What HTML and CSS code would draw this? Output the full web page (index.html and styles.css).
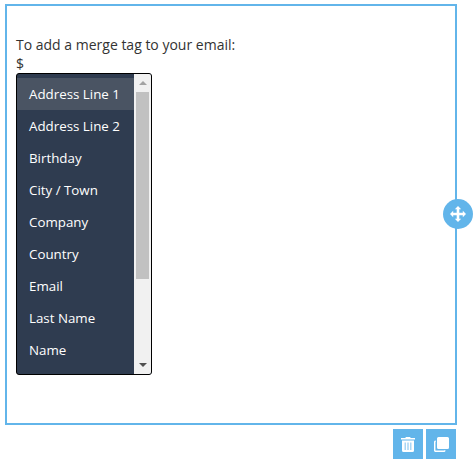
FILE: index.html
```html
<!DOCTYPE html>
<html lang="en">
<head>
<meta charset="utf-8">
<title>Merge tag</title>
<link rel="stylesheet" href="styles.css">
</head>
<body>
<div class="frame">
  <p class="line">To add a merge tag to your email:</p>
  <p class="line">$</p>
  <div class="dropdown">
    <ul class="items">
      <li class="item active">Address Line 1</li>
      <li class="item">Address Line 2</li>
      <li class="item">Birthday</li>
      <li class="item">City / Town</li>
      <li class="item">Company</li>
      <li class="item">Country</li>
      <li class="item">Email</li>
      <li class="item">Last Name</li>
      <li class="item">Name</li>
    </ul>
    <div class="scrollbar">
      <span class="arrow up"></span>
      <span class="thumb"></span>
      <span class="arrow down"></span>
    </div>
  </div>
  <button class="move" aria-label="Move">
    <svg viewBox="0 0 16 16" width="16" height="16"><path fill="#fff" d="M8 0l3.200 3.200H9.300v3.500h3.500V4.800L16 8l-3.200 3.200V9.300H9.300v3.500h1.900L8 16l-3.200-3.200h1.900V9.300H3.200v1.900L0 8l3.200-3.200v1.900h3.500V3.200H4.800z"/></svg>
  </button>
</div>
<div class="actions">
  <button class="action" aria-label="Delete">
    <svg viewBox="0 0 14 15" width="14" height="15"><path fill="#fff" d="M5 0h4l.8 1H14v1.500H0V1h4.200zM1 3.500h12v10A1.500 1.500 0 0 1 11.500 15h-9A1.500 1.500 0 0 1 1 13.500z"/><path fill="#a9d6f5" d="M3.500 5.500h1.500v7.500H3.500zM6.250 5.500h1.500v7.500h-1.500zM9 5.500h1.500v7.500H9z"/></svg>
  </button>
  <button class="action" aria-label="Duplicate">
    <svg viewBox="0 0 15 15" width="15" height="15"><path fill="#fff" d="M4.500 0h9A1.500 1.500 0 0 1 15 1.500v9a1.500 1.500 0 0 1-1.500 1.500h-9A1.500 1.500 0 0 1 3 10.500v-9A1.500 1.500 0 0 1 4.500 0z"/><path fill="none" stroke="#fff" stroke-width="1.500" d="M1.800 4.200h-.1a1 1 0 0 0-1 1v8.100a1 1 0 0 0 1 1h8.100a1 1 0 0 0 1-1v-.1"/></svg>
  </button>
</div>
</body>
</html>
```
FILE: styles.css
```css
* { box-sizing: border-box; }
html, body { margin: 0; padding: 0; background: #fff; }
body {
  padding: 4px 19px 0 5px;
  font-family: "Open Sans", sans-serif;
  font-size: 14px;
  color: #333;
}
.frame {
  position: relative;
  height: 421px;
  border: 2px solid #62b5ea;
  padding: 29px 9px 0;
}
.line { margin: 0; line-height: 19px; height: 19px; }
.dropdown {
  display: flex;
  width: 136px;
  height: 302px;
  border: 1px solid #000;
  border-radius: 3px;
  background: #2f3c50;
  overflow: hidden;
}
.items {
  flex: 1;
  list-style: none;
  margin: 0;
  padding: 4px 0 0;
  font-size: 13.333px;
}
.item {
  height: 32px;
  line-height: 32px;
  padding-left: 12px;
  color: #fff;
}
.active { background: #4a5463; }
.scrollbar {
  display: flex;
  flex-direction: column;
  align-items: center;
  width: 17px;
  background: #f1f1f1;
}
.thumb {
  display: block;
  width: 13px;
  height: 187px;
  margin-top: 7px;
  background: #c1c1c1;
}
.arrow {
  display: block;
  width: 0;
  height: 0;
  border-left: 4px solid transparent;
  border-right: 4px solid transparent;
}
.up { margin-top: 7px; border-bottom: 4px solid #a3a3a3; }
.down { margin-top: 84px; border-top: 4px solid #505050; }
.move {
  position: absolute;
  right: -18px;
  top: 193px;
  display: flex;
  align-items: center;
  justify-content: center;
  width: 30px;
  height: 30px;
  padding: 0;
  border: 0;
  border-radius: 50%;
  background: #62b5ea;
}
.actions {
  display: flex;
  justify-content: flex-end;
  gap: 3px;
  margin-top: 4px;
  padding-right: 1px;
}
.action {
  display: flex;
  align-items: center;
  justify-content: center;
  width: 30px;
  height: 30px;
  padding: 0;
  border: 0;
  background: #62b5ea;
}
```
